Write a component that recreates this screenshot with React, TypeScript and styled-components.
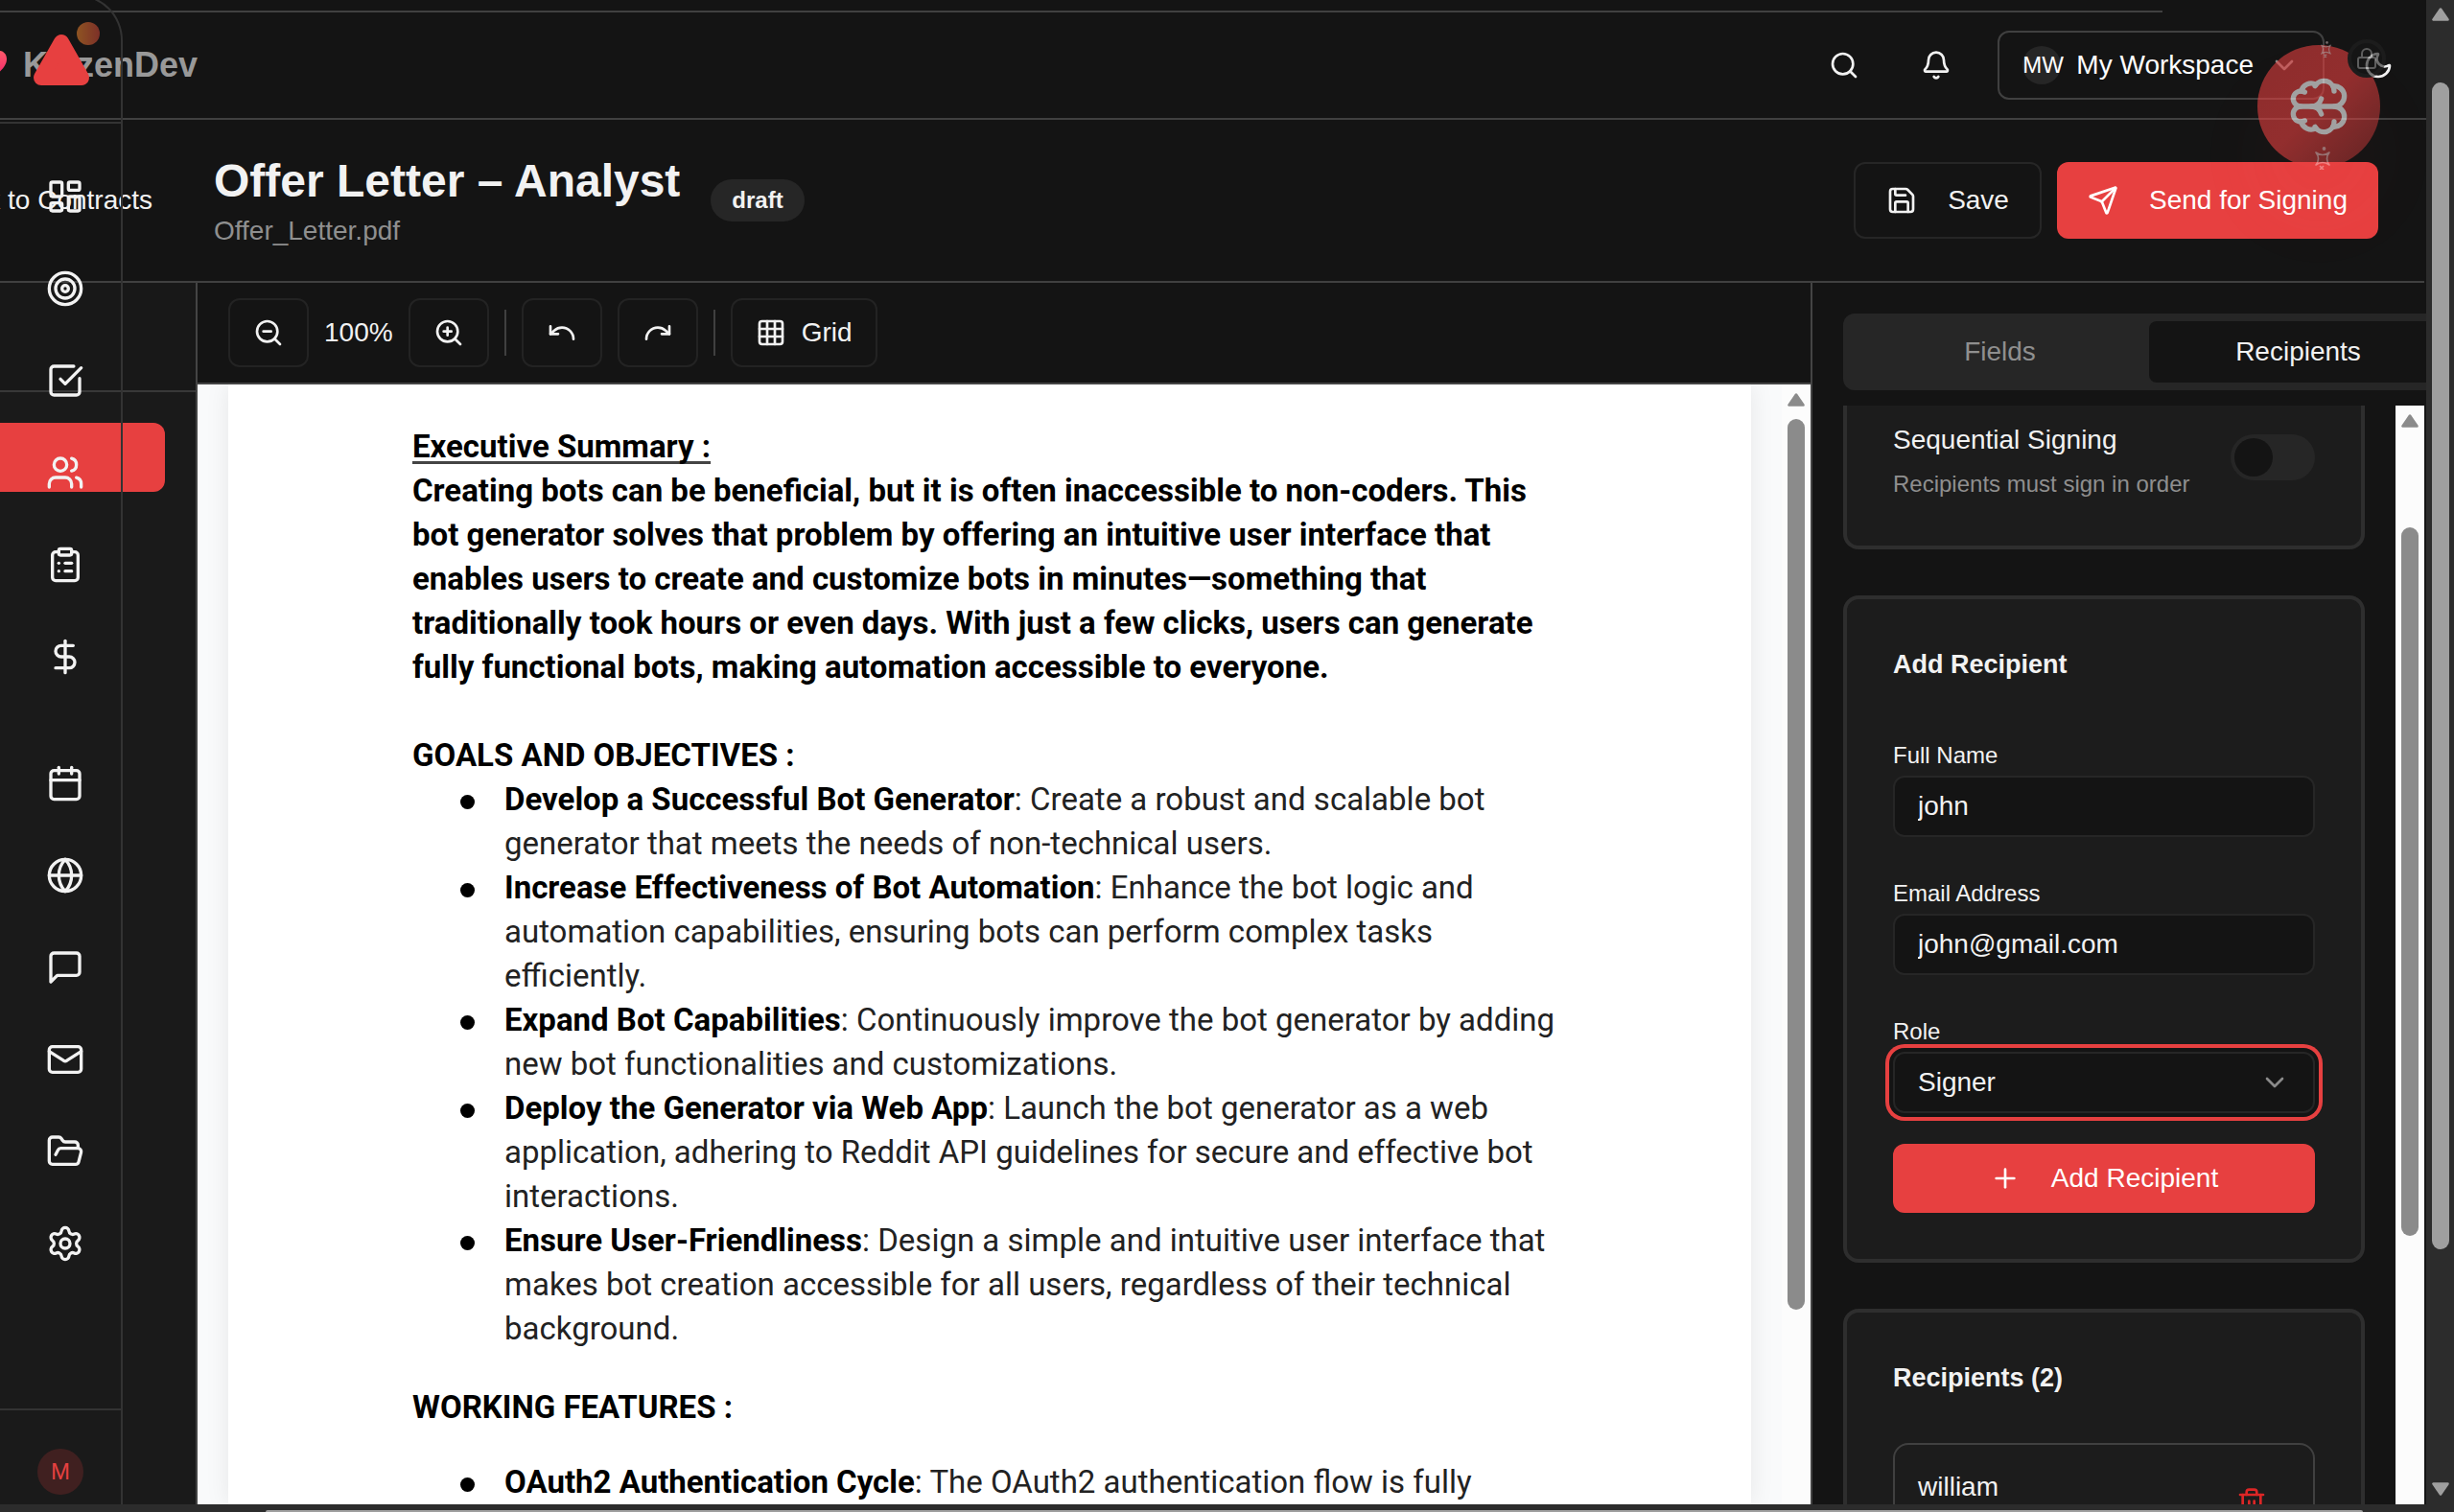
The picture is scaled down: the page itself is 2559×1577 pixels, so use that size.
import React, { useState } from "react";
import styled, { createGlobalStyle, css } from "styled-components";
import {
  Bell,
  Brain,
  Calendar,
  ChevronDown,
  ClipboardList,
  DollarSign,
  FolderOpen,
  Globe,
  Grid3x3,
  LayoutDashboard,
  Lock,
  Mail,
  Moon,
  Plus,
  Redo,
  Save,
  Search,
  Send,
  Settings,
  SquareCheckBig,
  Target,
  Trash2,
  Undo,
  Users,
  ZoomIn,
  ZoomOut,
} from "lucide-react";

const c = {
  bg: "#141414",
  panel: "#1a1a1a",
  card: "#1c1c1c",
  cardLine: "#2e2e2e",
  muted: "#262626",
  line: "#404040",
  text: "#f2f2f2",
  dim: "#8f8f8f",
  red: "#e74040",
};

const GlobalStyle = createGlobalStyle`
  *, *::before, *::after { box-sizing: border-box; }
  body {
    margin: 0;
    background: ${c.bg};
    color: ${c.text};
    font-family: "Liberation Sans", Arial, sans-serif;
    font-size: 28px;
    line-height: 40px;
    overflow: hidden;
  }
  button, input, select { font: inherit; color: inherit; }
  h1, h2, h3, p, ul { margin: 0; padding: 0; }
  svg { flex: none; display: block; }
`;

/* ---------- window and scrollbars ---------- */

const Window = styled.div`
  display: grid;
  grid-template-columns: minmax(0, 1fr) 29px;
  grid-template-rows: minmax(0, 1fr) 8px;
  height: 100vh;
`;

const Page = styled.div`
  position: relative;
  display: flex;
  flex-direction: column;
  min-width: 0;
  min-height: 0;
  overflow: hidden;
`;

const Track = styled.div<{ $dark?: boolean }>`
  display: flex;
  flex-direction: column;
  align-items: center;
  flex: none;
  width: ${(p) => (p.$dark ? 29 : 30)}px;
  padding: ${(p) => (p.$dark ? "8px 0 9px" : "9px 0 0")};
  background: ${(p) => (p.$dark ? "#2c2c2c" : "#fcfcfc")};
  color: ${(p) => (p.$dark ? "#9f9f9f" : "#8b8b8b")};
`;

const Space = styled.div<{ $grow: number }>`
  flex: ${(p) => p.$grow} 1 0;
`;

const Thumb = styled.div<{ $grow: number }>`
  flex: ${(p) => p.$grow} 1 0;
  width: 18px;
  border-radius: 9px;
  background: currentColor;
`;

const Arrow = ({ down = false }: { down?: boolean }) => (
  <svg width="18" height="14" viewBox="0 0 18 14" aria-hidden="true">
    <path
      d={down ? "M1.5 1.5h15L9 12.5z" : "M1.5 12.5h15L9 1.5z"}
      fill="currentColor"
      stroke="currentColor"
      strokeWidth="2.6"
      strokeLinejoin="round"
    />
  </svg>
);

const ScrollTrack = (p: { before: number; size: number; after: number; dark?: boolean }) => (
  <Track $dark={p.dark}>
    <Arrow />
    <Space $grow={p.before} />
    <Thumb $grow={p.size} />
    <Space $grow={p.after} />
    {p.dark && <Arrow down />}
  </Track>
);

const BottomTrack = styled.div`
  grid-column: 1 / -1;
  display: flex;
  padding: 6px 95px 0 277px;
  background: #2c2c2c;
`;

const BottomThumb = styled.div`
  flex: 1;
  border-radius: 8px 8px 0 0;
  background: #9f9f9f;
`;

/* ---------- top bar ---------- */

const TopEdge = styled.div`
  flex: none;
  height: 13px;
  margin-right: 275px;
  border-bottom: 2px solid ${c.line};
`;

const TopBar = styled.header`
  flex: none;
  display: flex;
  align-items: center;
  justify-content: space-between;
  height: 112px;
  padding-right: 26px;
  border-bottom: 2px solid ${c.line};
`;

const Brand = styled.div`
  display: flex;
  align-items: center;
  gap: 16px;
  margin-left: -28px;
  color: #999;
  font-size: 36px;
  font-weight: 700;
`;

const TopActions = styled.div`
  display: flex;
  align-items: center;
  gap: 32px;
`;

const IconButton = styled.button<{ $w: number }>`
  display: flex;
  align-items: center;
  justify-content: center;
  width: ${(p) => p.$w}px;
  height: 72px;
  padding: 0;
  border: 0;
  background: none;
`;

const Workspace = styled.button`
  display: flex;
  align-items: center;
  gap: 16px;
  height: 72px;
  padding: 0 24px;
  border: 2px solid ${c.line};
  border-radius: 12px;
  background: none;
  color: #fff;

  > svg { opacity: 0.5; }
`;

const WorkspaceBadge = styled.span`
  width: 40px;
  height: 40px;
  border-radius: 50%;
  background: ${c.muted};
  font-size: 24px;
  text-align: left;
`;

/* ---------- document header ---------- */

const DocHeader = styled.section`
  flex: none;
  display: flex;
  align-items: center;
  height: 170px;
  margin-right: 2px;
  padding-right: 48px;
  border-bottom: 2px solid ${c.line};
`;

const Back = styled.a`
  display: flex;
  justify-content: flex-end;
  flex: none;
  width: 159px;
  margin-right: 64px;
  overflow: hidden;
  color: ${c.text};
  text-decoration: none;
  white-space: nowrap;
`;

const DocTitle = styled.h1`
  font-size: 48px;
  line-height: 64px;
`;

const DocFile = styled.p`
  color: ${c.dim};
`;

const Status = styled.span`
  height: 44px;
  margin-left: 32px;
  padding: 0 22px;
  border-radius: 22px;
  background: ${c.muted};
  font-size: 24px;
  font-weight: 700;
  line-height: 44px;
`;

const DocActions = styled.div`
  display: flex;
  gap: 16px;
  margin-left: auto;
`;

const ActionButton = styled.button<{ $primary?: boolean; $wide?: boolean }>`
  display: flex;
  align-items: center;
  justify-content: center;
  gap: 32px;
  height: ${(p) => (p.$wide ? 72 : 80)}px;
  padding: 0 32px;
  border: 0;
  border-radius: 12px;
  background: none;
  ${(p) =>
    p.$primary
      ? css`
          background: ${c.red};
          color: #fff;
        `
      : css`
          border: 2px solid ${c.muted};
        `}
  ${(p) =>
    p.$wide &&
    css`
      width: 100%;
      margin-top: 32px;
    `}
`;

/* ---------- workspace ---------- */

const Body = styled.div`
  flex: 1;
  display: flex;
  min-height: 0;
  margin-right: 2px;
`;

const PagesPane = styled.div`
  flex: none;
  width: 206px;
  border-right: 2px solid #444;
  background: ${c.panel};
`;

const PagesHead = styled.div`
  height: 114px;
  border-bottom: 2px solid #383838;
  background: #181818;
`;

const PageChip = styled.div`
  width: 172px;
  height: 72px;
  margin-top: 32px;
  border-radius: 0 12px 12px 0;
  background: ${c.red};
`;

const Editor = styled.main`
  flex: 1;
  display: flex;
  flex-direction: column;
  min-width: 0;
`;

const Toolbar = styled.div`
  flex: none;
  display: flex;
  align-items: center;
  gap: 16px;
  padding: 16px 32px;
  border-bottom: 2px solid #444;
`;

const ToolButton = styled.button`
  display: flex;
  align-items: center;
  gap: 16px;
  height: 72px;
  padding: 0 24px;
  border: 2px solid #232323;
  border-radius: 12px;
  background: none;
`;

const Divider = styled.div`
  width: 2px;
  height: 48px;
  background: ${c.line};
`;

const Viewer = styled.div`
  flex: 1;
  display: flex;
  min-height: 0;
  background: #f9fafb;
`;

const Canvas = styled.div`
  flex: 1;
  min-width: 0;
  padding: 0 32px;
  overflow: hidden;
`;

const Paper = styled.article`
  min-height: 100%;
  padding: 42px 180px 0 192px;
  background: #fff;
  box-shadow: 0 0 24px rgba(0, 0, 0, 0.08);
  color: #222;
  font-family: Roboto, sans-serif;
  font-size: 33px;
  line-height: 46px;
  white-space: nowrap;

  h2, b { color: #000; font-size: inherit; font-weight: 700; }
`;

const Underlined = styled.h2`
  text-decoration: underline #444;
  text-decoration-thickness: 3px;
  text-underline-offset: 4px;
  text-decoration-skip-ink: none;
`;

const Summary = styled.p`
  margin-bottom: 46px;
  color: #000;
  font-weight: 700;
`;

const Bullets = styled.ul<{ $gap?: number }>`
  margin-top: ${(p) => p.$gap ?? 0}px;
  margin-bottom: 36px;
  padding-left: 50px;
  list-style: none;
`;

const Bullet = styled.li`
  display: flex;
  gap: 31px;

  &::before {
    content: "";
    flex: none;
    width: 15px;
    height: 15px;
    margin-top: 18px;
    border-radius: 50%;
    background: #000;
  }
`;

/* ---------- right panel ---------- */

const Panel = styled.aside`
  flex: none;
  display: flex;
  flex-direction: column;
  width: 640px;
  border-left: 2px solid #444;
`;

const Tabs = styled.div`
  flex: none;
  display: flex;
  height: 80px;
  margin: 32px -32px 16px 32px;
  padding: 8px;
  border-radius: 12px;
  background: ${c.muted};
`;

const Tab = styled.button<{ $active?: boolean }>`
  flex: 1;
  padding: 0;
  border: 0;
  border-radius: 8px;
  background: ${(p) => (p.$active ? c.bg : "transparent")};
  color: ${(p) => (p.$active ? c.text : c.dim)};
`;

const PanelScroll = styled.div`
  flex: 1;
  display: flex;
  min-height: 0;
`;

const Cards = styled.div`
  flex: 1;
  display: flex;
  flex-direction: column;
  gap: 48px;
  min-width: 0;
  padding: 0 32px;
  overflow: hidden;
`;

const Card = styled.section<{ $cut?: boolean }>`
  flex: none;
  padding: 48px;
  border: 4px solid ${c.cardLine};
  border-radius: 16px;
  background: ${c.card};
  ${(p) =>
    p.$cut &&
    css`
      padding-top: 10px;
      border-top: 0;
      border-radius: 0 0 16px 16px;
    `}
`;

const CardTitle = styled.h3`
  font-size: 27px;
  line-height: 40px;
`;

const SwitchRow = styled.label`
  display: flex;
  align-items: center;
  justify-content: space-between;
`;

const SwitchText = styled.span`
  display: grid;
  gap: 4px;
  line-height: 52px;
`;

const Hint = styled.small`
  color: ${c.dim};
  font-size: 24px;
  line-height: 32px;
`;

const Switch = styled.input`
  appearance: none;
  width: 88px;
  height: 48px;
  margin: 0;
  padding: 4px;
  border-radius: 24px;
  background: ${c.muted};

  &::before {
    content: "";
    display: block;
    width: 40px;
    height: 40px;
    border-radius: 50%;
    background: ${c.bg};
  }
`;

const Fields = styled.div`
  display: flex;
  flex-direction: column;
  gap: 42px;
  margin-top: 58px;
`;

const Field = styled.div`
  display: grid;
  gap: 4px;
`;

const Label = styled.label`
  font-size: 24px;
  line-height: 34px;
`;

const box = css`
  width: 100%;
  height: 64px;
  padding: 0 24px;
  border: 2px solid ${c.muted};
  border-radius: 12px;
  outline: 0;
  background: ${c.bg};
`;

const TextInput = styled.input`
  ${box}
`;

const SelectWrap = styled.div`
  display: grid;
  align-items: center;

  > * { grid-area: 1 / 1; }
  > svg { justify-self: end; margin-right: 26px; color: #8a8a8a; pointer-events: none; }
`;

const SelectInput = styled.select`
  ${box}
  appearance: none;
  box-shadow: 0 0 0 4px ${c.bg}, 0 0 0 8px ${c.red};
`;

const Person = styled.div`
  display: flex;
  justify-content: space-between;
  min-height: 124px;
  margin-top: 48px;
  padding: 24px;
  border: 2px solid ${c.line};
  border-radius: 16px;

  button { color: #dc2626; }
`;

/* ---------- overlays ---------- */

const Rail = styled.nav`
  position: absolute;
  top: -6px;
  bottom: -2px;
  left: 0;
  display: flex;
  flex-direction: column;
  width: 128px;
  border: 2px solid #333;
  border-left: 0;
  border-radius: 0 48px 0 0;
`;

const RailLogo = styled.div`
  display: flex;
  justify-content: center;
  height: 133px;
  padding-top: 24px;
  border-bottom: 2px solid #333;
`;

const RailGroup = styled.div`
  display: flex;
  flex-direction: column;
  gap: 56px;
  margin-bottom: 92px;
  padding-left: 48px;
`;

const RailItems = styled.div`
  flex: 1;
  padding-top: 56px;
`;

const RailLink = styled.a`
  display: block;
  width: 40px;
  height: 40px;
  color: ${c.text};
`;

const RailFoot = styled.div`
  display: flex;
  justify-content: center;
  height: 100px;
  padding-top: 40px;
  border-top: 2px solid #333;
`;

const Avatar = styled.span`
  width: 48px;
  height: 48px;
  border-radius: 50%;
  background: #402020;
  color: ${c.red};
  font-size: 24px;
  line-height: 48px;
  text-align: center;
`;

const Assistant = styled.button`
  position: absolute;
  top: 47px;
  right: 48px;
  display: grid;
  place-items: center;
  width: 128px;
  height: 128px;
  padding: 0;
  border: 0;
  border-radius: 50%;
  opacity: 0.6;
  background: linear-gradient(135deg, rgba(231, 64, 64, 0.96), rgba(231, 64, 64, 1) 50%, rgba(231, 64, 64, 0.62));
  box-shadow: 0 50px 80px rgba(231, 64, 64, 0.06);
  color: #fff;

  > svg:first-child { transform: rotate(-90deg); }
`;

const LockBadge = styled.span`
  position: absolute;
  top: -6px;
  right: -6px;
  display: grid;
  place-items: center;
  width: 40px;
  height: 40px;
  border: 4px solid #222;
  border-radius: 50%;
  background: #161616;
  color: #8f8f8f;
`;

const Spark = styled.svg<{ $x: number; $y: number }>`
  position: absolute;
  left: ${(p) => p.$x}px;
  top: ${(p) => p.$y}px;
  color: rgba(255, 225, 225, 0.7);
`;

const Sparkle = ({ x, y, size }: { x: number; y: number; size: number }) => (
  <Spark $x={x} $y={y} width={size} height={size * 1.5} viewBox="0 0 16 24" fill="none" stroke="currentColor" aria-hidden="true">
    <path d="M1 6Q8 11 15 6Q10 12.500 15 19Q8 14 1 19Q6 12.500 1 6z" strokeWidth="1.600" strokeLinejoin="round" />
    <circle cx="9.500" cy="2" r="1.900" fill="currentColor" stroke="none" />
    <path d="M5 20l4 4M9 20l-4 4" strokeWidth="1.600" />
  </Spark>
);

const Heart = () => (
  <svg width="36" height="32" viewBox="0 0 36 32" aria-hidden="true">
    <defs>
      <linearGradient id="heart" x1="0" y1="0" x2="0" y2="1">
        <stop offset="0" stopColor="#ff5a6a" />
        <stop offset="1" stopColor="#f0206c" />
      </linearGradient>
    </defs>
    <path d="M18 31C6 22 1 16 1 9.500 1 4.500 4.500 1 9 1c4 0 7 2 9 6 2-4 5-6 9-6 4.500 0 8 3.500 8 8.500C35 16 30 22 18 31z" fill="url(#heart)" />
  </svg>
);

const Logo = () => (
  <svg width="84" height="74" viewBox="0 0 84 74" aria-hidden="true">
    <defs>
      <linearGradient id="dot" x1="0" x2="1" y1="0" y2="0">
        <stop offset="0" stopColor="#8e5422" />
        <stop offset="1" stopColor="#7d3028" />
      </linearGradient>
    </defs>
    <circle cx="71" cy="15" r="12" fill="url(#dot)" />
    <path d="M43 24L64 61H22z" fill={c.red} stroke={c.red} strokeWidth="16" strokeLinejoin="round" />
  </svg>
);

const MessageIcon = () => (
  <svg width="40" height="40" viewBox="0 0 24 24" fill="none" stroke="currentColor" strokeWidth="2" strokeLinecap="round" strokeLinejoin="round" aria-hidden="true">
    <path d="M21 15a2 2 0 0 1-2 2H7l-4 4V5a2 2 0 0 1 2-2h14a2 2 0 0 1 2 2z" />
  </svg>
);

const railTop = [
  ["Dashboard", LayoutDashboard],
  ["Goals", Target],
  ["Tasks", SquareCheckBig],
  ["Clients", Users],
  ["Projects", ClipboardList],
  ["Finance", DollarSign],
] as const;

const railBottom = [
  ["Calendar", Calendar],
  ["Web", Globe],
  ["Messages", MessageIcon],
  ["Mail", Mail],
  ["Files", FolderOpen],
  ["Settings", Settings],
] as const;

const goals: { name: string; lines: string[] }[] = [
  {
    name: "Develop a Successful Bot Generator",
    lines: [": Create a robust and scalable bot", "generator that meets the needs of non-technical users."],
  },
  {
    name: "Increase Effectiveness of Bot Automation",
    lines: [": Enhance the bot logic and", "automation capabilities, ensuring bots can perform complex tasks", "efficiently."],
  },
  {
    name: "Expand Bot Capabilities",
    lines: [": Continuously improve the bot generator by adding", "new bot functionalities and customizations."],
  },
  {
    name: "Deploy the Generator via Web App",
    lines: [": Launch the bot generator as a web", "application, adhering to Reddit API guidelines for secure and effective bot", "interactions."],
  },
  {
    name: "Ensure User-Friendliness",
    lines: [": Design a simple and intuitive user interface that", "makes bot creation accessible for all users, regardless of their technical", "background."],
  },
];

const features = [{ name: "OAuth2 Authentication Cycle", lines: [": The OAuth2 authentication flow is fully"] }];

const summary = [
  "Creating bots can be beneficial, but it is often inaccessible to non-coders. This",
  "bot generator solves that problem by offering an intuitive user interface that",
  "enables users to create and customize bots in minutes—something that",
  "traditionally took hours or even days. With just a few clicks, users can generate",
  "fully functional bots, making automation accessible to everyone.",
];

const Lines = ({ lines }: { lines: string[] }) => (
  <>
    {lines.map((line, i) => (
      <React.Fragment key={line}>
        {i > 0 && <br />}
        {line}
      </React.Fragment>
    ))}
  </>
);

const BulletList = ({ items, gap }: { items: typeof goals; gap?: number }) => (
  <Bullets $gap={gap}>
    {items.map((item) => (
      <Bullet key={item.name}>
        <div>
          <b>{item.name}</b>
          <Lines lines={item.lines} />
        </div>
      </Bullet>
    ))}
  </Bullets>
);

export default function App() {
  const [name, setName] = useState("john");
  const [email, setEmail] = useState("john@gmail.com");

  return (
    <>
      <GlobalStyle />
      <Window>
        <Page>
          <TopEdge />
          <TopBar>
            <Brand>
              <Heart />
              <span>KaizenDev</span>
            </Brand>
            <TopActions>
              <IconButton $w={64} aria-label="Search"><Search size={32} /></IconButton>
              <IconButton $w={64} aria-label="Notifications"><Bell size={32} /></IconButton>
              <Workspace>
                <WorkspaceBadge>MW</WorkspaceBadge>
                My Workspace
                <ChevronDown size={32} />
              </Workspace>
              <IconButton $w={48} aria-label="Toggle theme"><Moon size={32} /></IconButton>
            </TopActions>
          </TopBar>

          <DocHeader>
            <Back href="#contracts">Back to Contracts</Back>
            <div>
              <DocTitle>Offer Letter – Analyst</DocTitle>
              <DocFile>Offer_Letter.pdf</DocFile>
            </div>
            <Status>draft</Status>
            <DocActions>
              <ActionButton><Save size={32} />Save</ActionButton>
              <ActionButton $primary><Send size={32} />Send for Signing</ActionButton>
            </DocActions>
          </DocHeader>

          <Body>
            <PagesPane>
              <PagesHead />
              <PageChip />
            </PagesPane>

            <Editor>
              <Toolbar>
                <ToolButton aria-label="Zoom out"><ZoomOut size={32} /></ToolButton>
                <span>100%</span>
                <ToolButton aria-label="Zoom in"><ZoomIn size={32} /></ToolButton>
                <Divider />
                <ToolButton aria-label="Undo"><Undo size={32} /></ToolButton>
                <ToolButton aria-label="Redo"><Redo size={32} /></ToolButton>
                <Divider />
                <ToolButton><Grid3x3 size={32} />Grid</ToolButton>
              </Toolbar>
              <Viewer>
                <Canvas>
                  <Paper>
                    <Underlined>Executive Summary :</Underlined>
                    <Summary><Lines lines={summary} /></Summary>
                    <h2>GOALS AND OBJECTIVES :</h2>
                    <BulletList items={goals} />
                    <h2>WORKING FEATURES :</h2>
                    <BulletList items={features} gap={32} />
                  </Paper>
                </Canvas>
                <ScrollTrack before={13} size={929} after={203} />
              </Viewer>
            </Editor>

            <Panel>
              <Tabs role="tablist">
                <Tab role="tab" aria-selected={false}>Fields</Tab>
                <Tab role="tab" aria-selected $active>Recipients</Tab>
              </Tabs>
              <PanelScroll>
                <Cards>
                  <Card $cut>
                    <SwitchRow>
                      <SwitchText>
                        Sequential Signing
                        <Hint>Recipients must sign in order</Hint>
                      </SwitchText>
                      <Switch type="checkbox" role="switch" />
                    </SwitchRow>
                  </Card>
                  <Card>
                    <CardTitle>Add Recipient</CardTitle>
                    <Fields>
                      <Field>
                        <Label htmlFor="name">Full Name</Label>
                        <TextInput id="name" value={name} onChange={(e) => setName(e.target.value)} />
                      </Field>
                      <Field>
                        <Label htmlFor="email">Email Address</Label>
                        <TextInput id="email" type="email" value={email} onChange={(e) => setEmail(e.target.value)} />
                      </Field>
                      <Field>
                        <Label htmlFor="role">Role</Label>
                        <SelectWrap>
                          <SelectInput id="role" defaultValue="Signer">
                            <option>Signer</option>
                          </SelectInput>
                          <ChevronDown size={32} />
                        </SelectWrap>
                      </Field>
                    </Fields>
                    <ActionButton $primary $wide><Plus size={32} />Add Recipient</ActionButton>
                  </Card>
                  <Card>
                    <CardTitle>Recipients (2)</CardTitle>
                    <Person>
                      <span>william</span>
                      <IconButton $w={80} aria-label="Remove william"><Trash2 size={32} /></IconButton>
                    </Person>
                  </Card>
                </Cards>
                <ScrollTrack before={104} size={739} after={280} />
              </PanelScroll>
            </Panel>
          </Body>

          <Rail aria-label="Main">
            <RailLogo><Logo /></RailLogo>
            <RailItems>
              {[railTop, railBottom].map((group, i) => (
                <RailGroup key={i}>
                  {group.map(([label, Icon]) => (
                    <RailLink key={label} href={`#${label.toLowerCase()}`} aria-label={label}>
                      <Icon size={40} />
                    </RailLink>
                  ))}
                </RailGroup>
              ))}
            </RailItems>
            <RailFoot><Avatar>M</Avatar></RailFoot>
          </Rail>

          <Assistant aria-label="Assistant">
            <Brain size={64} />
            <Sparkle x={66} y={-4} size={11} />
            <Sparkle x={60} y={106} size={16} />
            <LockBadge><Lock size={24} /></LockBadge>
          </Assistant>
        </Page>
        <ScrollTrack dark before={64} size={1217} after={243} />
        <BottomTrack><BottomThumb /></BottomTrack>
      </Window>
    </>
  );
}
